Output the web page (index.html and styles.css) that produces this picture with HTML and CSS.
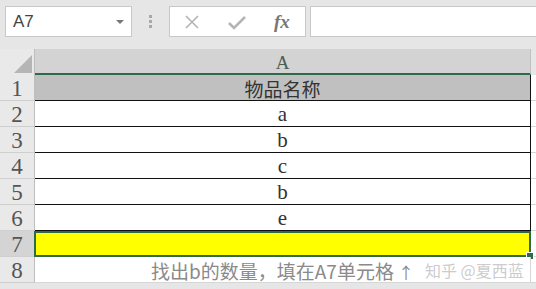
FILE: index.html
```html
<!DOCTYPE html>
<html lang="zh-CN">
<head>
    <meta charset="UTF-8">
    <meta name="viewport" content="width=device-width, initial-scale=1.0">
    <title>物品名称 - 工作表</title>
    <link rel="stylesheet" href="styles.css">
</head>
<body>

    <div class="toolbar">
        <div class="namebox">
            <span class="cellref">A7</span>
            <span class="caret"></span>
        </div>
        <div class="grip"><i></i><i></i><i></i></div>
        <div class="fbuttons">
            <svg class="ficon" width="16" height="16" viewBox="0 0 16 16">
                <path d="M2 2 L14 14 M14 2 L2 14" stroke="#b4b4b4" stroke-width="1.6" fill="none"/>
            </svg>
            <svg class="ficon" width="18" height="16" viewBox="0 0 18 16">
                <path d="M1 9 L6 14 L17 3" stroke="#b4b4b4" stroke-width="2.6" fill="none"/>
            </svg>
            <span class="fx">fx</span>
        </div>
        <div class="formula"></div>
    </div>

    <div class="sheet">
        <div class="row head">
            <div class="rh corner"><span class="tri"></span></div>
            <div class="cell colhead">A</div>
            <div class="rest"></div>
        </div>

        <div class="row">
            <div class="rh">1</div>
            <div class="cell title">物品名称</div>
            <div class="rest"></div>
        </div>
        <div class="row">
            <div class="rh">2</div>
            <div class="cell data">a</div>
            <div class="rest"></div>
        </div>
        <div class="row">
            <div class="rh">3</div>
            <div class="cell data">b</div>
            <div class="rest"></div>
        </div>
        <div class="row">
            <div class="rh">4</div>
            <div class="cell data">c</div>
            <div class="rest"></div>
        </div>
        <div class="row">
            <div class="rh">5</div>
            <div class="cell data">b</div>
            <div class="rest"></div>
        </div>
        <div class="row">
            <div class="rh">6</div>
            <div class="cell data">e</div>
            <div class="rest"></div>
        </div>
        <div class="row">
            <div class="rh active">7</div>
            <div class="cell selected"><span class="handle"></span></div>
            <div class="rest"></div>
        </div>
        <div class="row">
            <div class="rh">8</div>
            <div class="cell note">找出b的数量，填在A7单元格<span class="arrow">↑</span></div>
            <div class="rest plain"></div>
        </div>
    </div>

    <div class="watermark">知乎 @夏西蓝</div>

</body>
</html>
```

FILE: styles.css
```css
body {
    margin: 0;
    width: 536px;
    height: 289px;
    overflow: hidden;
    background-color: #e6e6e6;
    font-family: "Liberation Serif", "Noto Sans CJK SC", serif;
    position: relative;
}

/* formula bar */
.toolbar {
    height: 49px;
    display: flex;
    align-items: flex-start;
    padding-top: 6px;
    box-sizing: border-box;
}
.namebox {
    margin-left: 5px;
    width: 127px;
    height: 31px;
    box-sizing: border-box;
    background: white;
    border: 1px solid #c8c8c8;
    display: flex;
    align-items: center;
    justify-content: space-between;
    padding: 0 7px 0 7px;
}
.cellref {
    font-family: "Liberation Sans", "Noto Sans", sans-serif;
    font-size: 17px;
    color: #444;
}
.caret {
    width: 0;
    height: 0;
    border-left: 4px solid transparent;
    border-right: 4px solid transparent;
    border-top: 4px solid #777;
}
.grip {
    width: 37px;
    height: 31px;
    display: flex;
    flex-direction: column;
    align-items: center;
    justify-content: center;
    gap: 2px;
}
.grip i {
    display: block;
    width: 3px;
    height: 3px;
    background: #a8a8a8;
}
.fbuttons {
    width: 137px;
    height: 31px;
    box-sizing: border-box;
    background: white;
    border: 1px solid #c8c8c8;
    display: flex;
    align-items: center;
    padding-left: 14px;
    gap: 28px;
}
.fx {
    font-family: "Liberation Serif", serif;
    font-style: italic;
    font-weight: bold;
    font-size: 19px;
    color: #777;
}
.formula {
    margin-left: 4px;
    flex: 1;
    height: 31px;
    box-sizing: border-box;
    background: white;
    border: 1px solid #c8c8c8;
    border-right: none;
}

/* sheet grid */
.row {
    display: flex;
    height: 26px;
}
.rh {
    width: 35px;
    flex: none;
    box-sizing: border-box;
    border-right: 1px solid #bdbdbd;
    border-bottom: 1px solid #cfcfcf;
    background: #e9e9e9;
    color: #555;
    font-size: 23px;
    line-height: 27px;
    text-align: center;
}
.rh.active {
    background: #d4d4d4;
}
.corner {
    position: relative;
    border-bottom: none;
}
.tri {
    position: absolute;
    right: 2px;
    bottom: 2px;
    width: 0;
    height: 0;
    border-left: 18px solid transparent;
    border-bottom: 18px solid #b5b5b5;
}
.cell {
    width: 496px;
    flex: none;
    box-sizing: border-box;
    border-right: 1px solid #111;
    border-bottom: 1px solid #111;
    background: white;
    text-align: center;
    color: #333;
    position: relative;
}
.colhead {
    background: #d3d3d3;
    border-right: 1px solid #c0c0c0;
    border-bottom: 2px solid #2f6b48;
    color: #4c5d52;
    font-size: 19px;
    line-height: 27px;
}
.title {
    background: #c0c0c0;
    font-family: "Noto Sans CJK SC", sans-serif;
    font-size: 19px;
    line-height: 28px;
    color: #333;
}
.data {
    font-size: 21px;
    line-height: 26px;
}
.selected {
    background: #ffff00;
    border: 2px solid #2f6b48;
    margin-left: -1px;
    width: 497px;
}
.handle {
    position: absolute;
    right: -5px;
    bottom: -5px;
    width: 6px;
    height: 6px;
    background: #2f6b48;
    border: 1px solid white;
}
.note {
    border-right: 1px solid #d6d6d6;
    border-bottom: 1px solid #d6d6d6;
    font-family: "Noto Sans CJK SC", sans-serif;
    font-size: 19px;
    line-height: 27px;
    color: #8a8a8a;
}
.arrow {
    margin-left: 4px;
    font-size: 16px;
}
.rest {
    flex: 1;
    background: white;
    border-bottom: 1px solid #d6d6d6;
}
.head .rest {
    background: #e6e6e6;
    border-bottom: none;
}

.watermark {
    position: absolute;
    left: 425px;
    top: 258px;
    font-family: "Noto Sans CJK SC", sans-serif;
    font-size: 16px;
    color: rgba(190, 190, 190, 0.8);
}
```
